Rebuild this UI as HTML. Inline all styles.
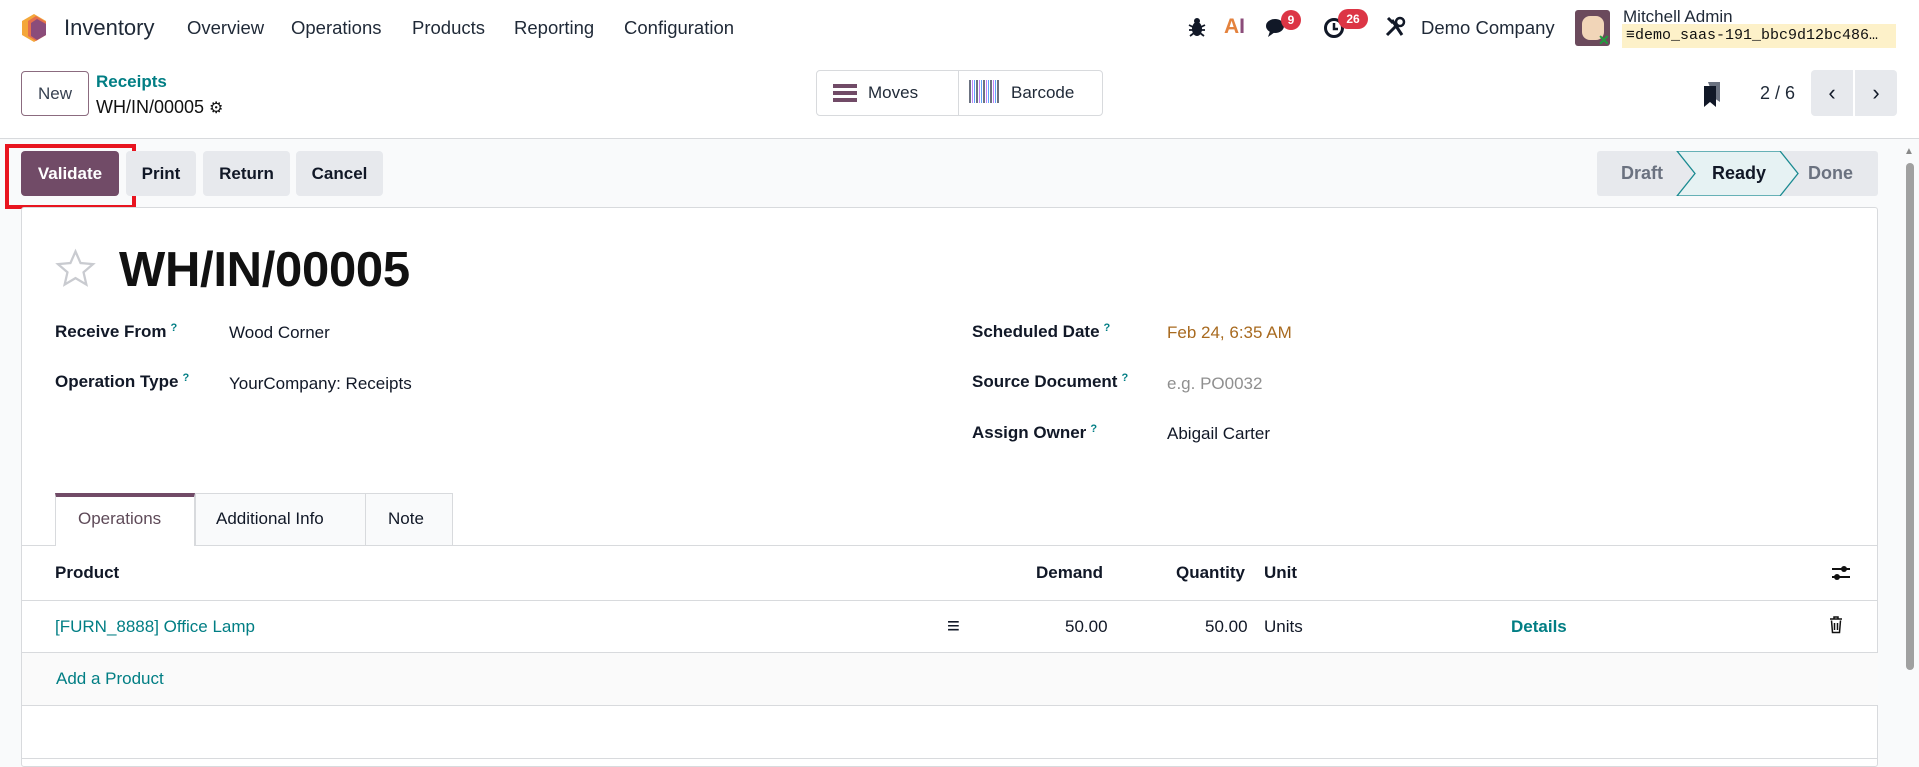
<!DOCTYPE html>
<html><head><meta charset="utf-8"><style>
*{box-sizing:border-box;margin:0;padding:0}
body{width:1919px;height:760px;overflow:hidden;background:#f9fafb;font-family:"Liberation Sans",sans-serif;color:#111827;font-size:17px;position:relative}
.a{position:absolute;white-space:nowrap}
.nav{position:absolute;left:0;top:0;width:1919px;height:56px;background:#fff}
.cp{position:absolute;left:0;top:56px;width:1919px;height:83px;background:#fff;border-bottom:1px solid #d8dadd}
.btn{position:absolute;border-radius:4px;font-weight:bold;font-size:17px;display:flex;align-items:center;justify-content:center}
.lbl{font-weight:bold;font-size:17px;color:#111827}
.q{color:#017e84;font-size:11px;font-weight:bold;vertical-align:top;margin-left:4px}
.teal{color:#017e84}
.line{position:absolute;left:22px;width:1856px;height:1px;background:#d8dadd}
</style></head><body>
<div class="nav">
 <svg class="a" style="left:20px;top:13px" width="28" height="30" viewBox="0 0 28 30"><polygon points="14,1 26,8 26,22 14,29 2,22 2,8" fill="#f4a73a"/><polygon points="16,3 26,9 26,22 16,28 8,23 8,8" fill="#e46f4d"/><polygon points="17,6 26,11 26,22 17,27 11,23 11,10" fill="#8b4c7a"/></svg>
 <div class="a" style="left:64px;top:15px;font-size:22px;color:#1f2937">Inventory</div>
 <div class="a" style="left:187px;top:17px;font-size:18.5px;color:#1f2937">Overview</div>
 <div class="a" style="left:291px;top:17px;font-size:18.5px;color:#1f2937">Operations</div>
 <div class="a" style="left:412px;top:17px;font-size:18.5px;color:#1f2937">Products</div>
 <div class="a" style="left:514px;top:17px;font-size:18.5px;color:#1f2937">Reporting</div>
 <div class="a" style="left:624px;top:17px;font-size:18.5px;color:#1f2937">Configuration</div>
 <svg class="a" style="left:1188px;top:17px" width="18" height="20" viewBox="0 0 18 20"><ellipse cx="9" cy="12" rx="5" ry="7" fill="#111827"/><circle cx="9" cy="4" r="3" fill="#111827"/><path d="M1 8l4 2M17 8l-4 2M1 13h4M17 13h-4M2 19l4-3M16 19l-4-3" stroke="#111827" stroke-width="1.8"/></svg>
 <div class="a" style="left:1224px;top:15px;font-size:21px;font-weight:bold;color:#8b4c7a"><span style="color:#e4823d">A</span>I</div>
 <svg class="a" style="left:1265px;top:17px" width="24" height="22" viewBox="0 0 24 22"><ellipse cx="10" cy="9" rx="9" ry="7" fill="#111827"/><path d="M5 14 L3 20 L10 15Z" fill="#111827"/></svg>
 <div class="a" style="left:1281px;top:10px;width:20px;height:20px;border-radius:10px;background:#dc3545;color:#fff;font-size:12px;font-weight:bold;text-align:center;line-height:20px">9</div>
 <svg class="a" style="left:1323px;top:17px" width="22" height="22" viewBox="0 0 22 22"><circle cx="11" cy="11" r="8.5" fill="none" stroke="#111827" stroke-width="3"/><path d="M11 6v6h4" stroke="#111827" stroke-width="2.5" fill="none"/></svg>
 <div class="a" style="left:1338px;top:9px;width:30px;height:20px;border-radius:10px;background:#dc3545;color:#fff;font-size:12px;font-weight:bold;text-align:center;line-height:20px">26</div>
 <svg class="a" style="left:1384px;top:16px" width="22" height="22" viewBox="0 0 22 22"><path d="M3 19L14 8M8 4l10 15" stroke="#111827" stroke-width="3" fill="none"/><circle cx="16" cy="6" r="4" fill="none" stroke="#111827" stroke-width="2.5"/><path d="M4 2l5 5" stroke="#111827" stroke-width="3"/></svg>
 <div class="a" style="left:1421px;top:17px;font-size:18.5px;color:#1f2937">Demo Company</div>
 <div class="a" style="left:1575px;top:10px;width:35px;height:36px;background:#6b4a5c;border-radius:3px"></div>
 <div class="a" style="left:1582px;top:16px;width:22px;height:24px;background:#f1d5b8;border-radius:8px"></div>
 <div class="a" style="left:1598px;top:32px;color:#1e9e3c;font-size:14px;font-weight:bold">&#x2715;</div>
 <div class="a" style="left:1623px;top:7px;font-size:17px;color:#1f2937">Mitchell Admin</div>
 <div class="a" style="left:1622px;top:24px;width:274px;height:24px;background:#fdf1c9"></div>
 <div class="a" style="left:1626px;top:27px;font-family:'Liberation Mono',monospace;font-size:15px;color:#111">&#x2261;demo_saas-191_bbc9d12bc486…</div>
</div>
<div class="cp">
 <div class="btn" style="left:21px;top:15px;width:68px;height:45px;border:1px solid #8b6b7f;background:#fff;font-weight:normal;color:#374151">New</div>
 <div class="a" style="left:96px;top:16px;font-size:17px;font-weight:bold;color:#017e84">Receipts</div>
 <div class="a" style="left:96px;top:41px;font-size:18px;color:#111">WH/IN/00005 <span style="font-size:16px">&#x2699;</span></div>
 <div class="a" style="left:816px;top:14px;width:287px;height:46px;border:1px solid #d8dadd;border-radius:4px;background:#fff"></div>
 <div class="a" style="left:958px;top:14px;width:1px;height:46px;background:#d8dadd"></div>
 <div class="a" style="left:833px;top:28px;width:24px;height:4px;background:#714b67;box-shadow:0 7px 0 #714b67,0 14px 0 #714b67"></div>
 <div class="a" style="left:868px;top:27px;font-size:17px;color:#1f2937">Moves</div>
 <div class="a" style="left:969px;top:24px;width:30px;height:23px;background:repeating-linear-gradient(90deg,#6b7280 0 2px,#fff 2px 3px,#c084fc 3px 4px,#fff 4px 5px,#60a5fa 5px 6px,#fff 6px 7px)"></div>
 <div class="a" style="left:1011px;top:27px;font-size:17px;color:#1f2937">Barcode</div>
 <svg class="a" style="left:1702px;top:26px" width="20" height="26" viewBox="0 0 20 26"><path d="M6 0h12v20l-6-4z" fill="#6b7280"/><path d="M2 4h12v21l-6-5-6 5z" fill="#111827"/></svg>
 <div class="a" style="left:1760px;top:27px;font-size:18px;color:#1f2937">2 / 6</div>
 <div class="btn" style="left:1811px;top:14px;width:42px;height:46px;background:#e7e9ed;border-radius:4px 0 0 4px;font-weight:normal;font-size:22px">&#x2039;</div>
 <div class="btn" style="left:1855px;top:14px;width:42px;height:46px;background:#e7e9ed;border-radius:0 4px 4px 0;font-weight:normal;font-size:22px">&#x203A;</div>
</div>
<div class="btn" style="left:21px;top:151px;width:98px;height:45px;background:#714b67;color:#fff">Validate</div>
<div class="a" style="left:5px;top:144px;width:131px;height:65px;border:4px solid #e8141f"></div>
<div class="btn" style="left:126px;top:151px;width:70px;height:45px;background:#e7e9ed">Print</div>
<div class="btn" style="left:203px;top:151px;width:87px;height:45px;background:#e7e9ed">Return</div>
<div class="btn" style="left:296px;top:151px;width:87px;height:45px;background:#e7e9ed">Cancel</div>
<div class="a" style="left:1597px;top:151px;width:281px;height:45px;background:#e7e9ed;border-radius:3px"></div>
<svg class="a" style="left:1676px;top:151px" width="124" height="45" viewBox="0 0 124 45"><polygon points="1,0 104,0 122,22.5 104,45 1,45 19,22.5" fill="#e6f2f3" stroke="#1a8a91" stroke-width="1.3"/></svg>
<div class="a" style="left:1621px;top:163px;font-size:18px;color:#6b7280;font-weight:bold">Draft</div>
<div class="a" style="left:1712px;top:163px;font-size:18px;font-weight:bold">Ready</div>
<div class="a" style="left:1808px;top:163px;font-size:18px;color:#6b7280;font-weight:bold">Done</div>
<div class="a" style="left:1904px;top:146px;font-size:10px;color:#888">&#x25B2;</div>
<div class="a" style="left:1906px;top:163px;width:8px;height:507px;background:#a0a0a0;border-radius:4px"></div>
<div class="a" style="left:21px;top:207px;width:1857px;height:560px;background:#fff;border:1px solid #d8dadd;border-radius:3px"></div>
<svg class="a" style="left:54px;top:248px" width="43" height="42" viewBox="0 0 24 24"><path d="M12 2l2.9 6.6 7.1.6-5.4 4.7 1.6 7-6.2-3.7-6.2 3.7 1.6-7L2 9.2l7.1-.6z" fill="none" stroke="#c9cbd0" stroke-width="1.3"/></svg>
<div class="a" style="left:119px;top:242px;font-size:49px;font-weight:bold;color:#111;letter-spacing:-0.3px">WH/IN/00005</div>
<div class="a lbl" style="left:55px;top:322px">Receive From<span class="q">?</span></div>
<div class="a" style="left:229px;top:323px">Wood Corner</div>
<div class="a lbl" style="left:55px;top:372px">Operation Type<span class="q">?</span></div>
<div class="a" style="left:229px;top:374px">YourCompany: Receipts</div>
<div class="a lbl" style="left:972px;top:322px">Scheduled Date<span class="q">?</span></div>
<div class="a" style="left:1167px;top:323px;color:#a86a1f">Feb 24, 6:35 AM</div>
<div class="a lbl" style="left:972px;top:372px">Source Document<span class="q">?</span></div>
<div class="a" style="left:1167px;top:374px;color:#8f8f8f">e.g. PO0032</div>
<div class="a lbl" style="left:972px;top:423px">Assign Owner<span class="q">?</span></div>
<div class="a" style="left:1167px;top:424px">Abigail Carter</div>
<div class="a" style="left:195px;top:493px;width:258px;height:52px;background:#f9fafb;border:1px solid #d8dadd;border-bottom:none"></div>
<div class="a" style="left:365px;top:493px;width:1px;height:52px;background:#d8dadd"></div>
<div class="line" style="top:545px"></div>
<div class="a" style="left:55px;top:493px;width:140px;height:53px;background:#fff;border-top:4px solid #714b67;border-left:1px solid #d8dadd;border-right:1px solid #d8dadd"></div>
<div class="a" style="left:78px;top:509px;color:#5e4a58">Operations</div>
<div class="a" style="left:216px;top:509px">Additional Info</div>
<div class="a" style="left:388px;top:509px">Note</div>
<div class="a lbl" style="left:55px;top:563px">Product</div>
<div class="a lbl" style="left:1036px;top:563px">Demand</div>
<div class="a lbl" style="left:1176px;top:563px">Quantity</div>
<div class="a lbl" style="left:1264px;top:563px">Unit</div>
<svg class="a" style="left:1831px;top:563px" width="20" height="20" viewBox="0 0 20 20"><path d="M1 6h18M1 14h18" stroke="#111" stroke-width="2"/><circle cx="13" cy="6" r="3" fill="#111"/><circle cx="6" cy="14" r="3" fill="#111"/></svg>
<div class="line" style="top:600px"></div>
<div class="a teal" style="left:55px;top:617px">[FURN_8888] Office Lamp</div>
<div class="a" style="left:947px;top:613px;font-size:22px;font-weight:bold">&#x2261;</div>
<div class="a" style="left:1065px;top:617px">50.00</div>
<div class="a" style="left:1205px;top:617px">50.00</div>
<div class="a" style="left:1264px;top:617px">Units</div>
<div class="a teal" style="left:1511px;top:617px;font-weight:bold">Details</div>
<svg class="a" style="left:1829px;top:616px" width="14" height="18" viewBox="0 0 14 18"><path d="M1 3h12M5 3V1h4v2M2.5 4.5l1 12h7l1-12M5.5 7v7M8.5 7v7" stroke="#111" stroke-width="1.5" fill="none"/></svg>
<div class="a" style="left:22px;top:652px;width:1856px;height:54px;background:#fafafa;border-top:1px solid #d8dadd;border-bottom:1px solid #d8dadd"></div>
<div class="a teal" style="left:56px;top:669px">Add a Product</div>
<div class="line" style="top:758px"></div>
</body></html>
